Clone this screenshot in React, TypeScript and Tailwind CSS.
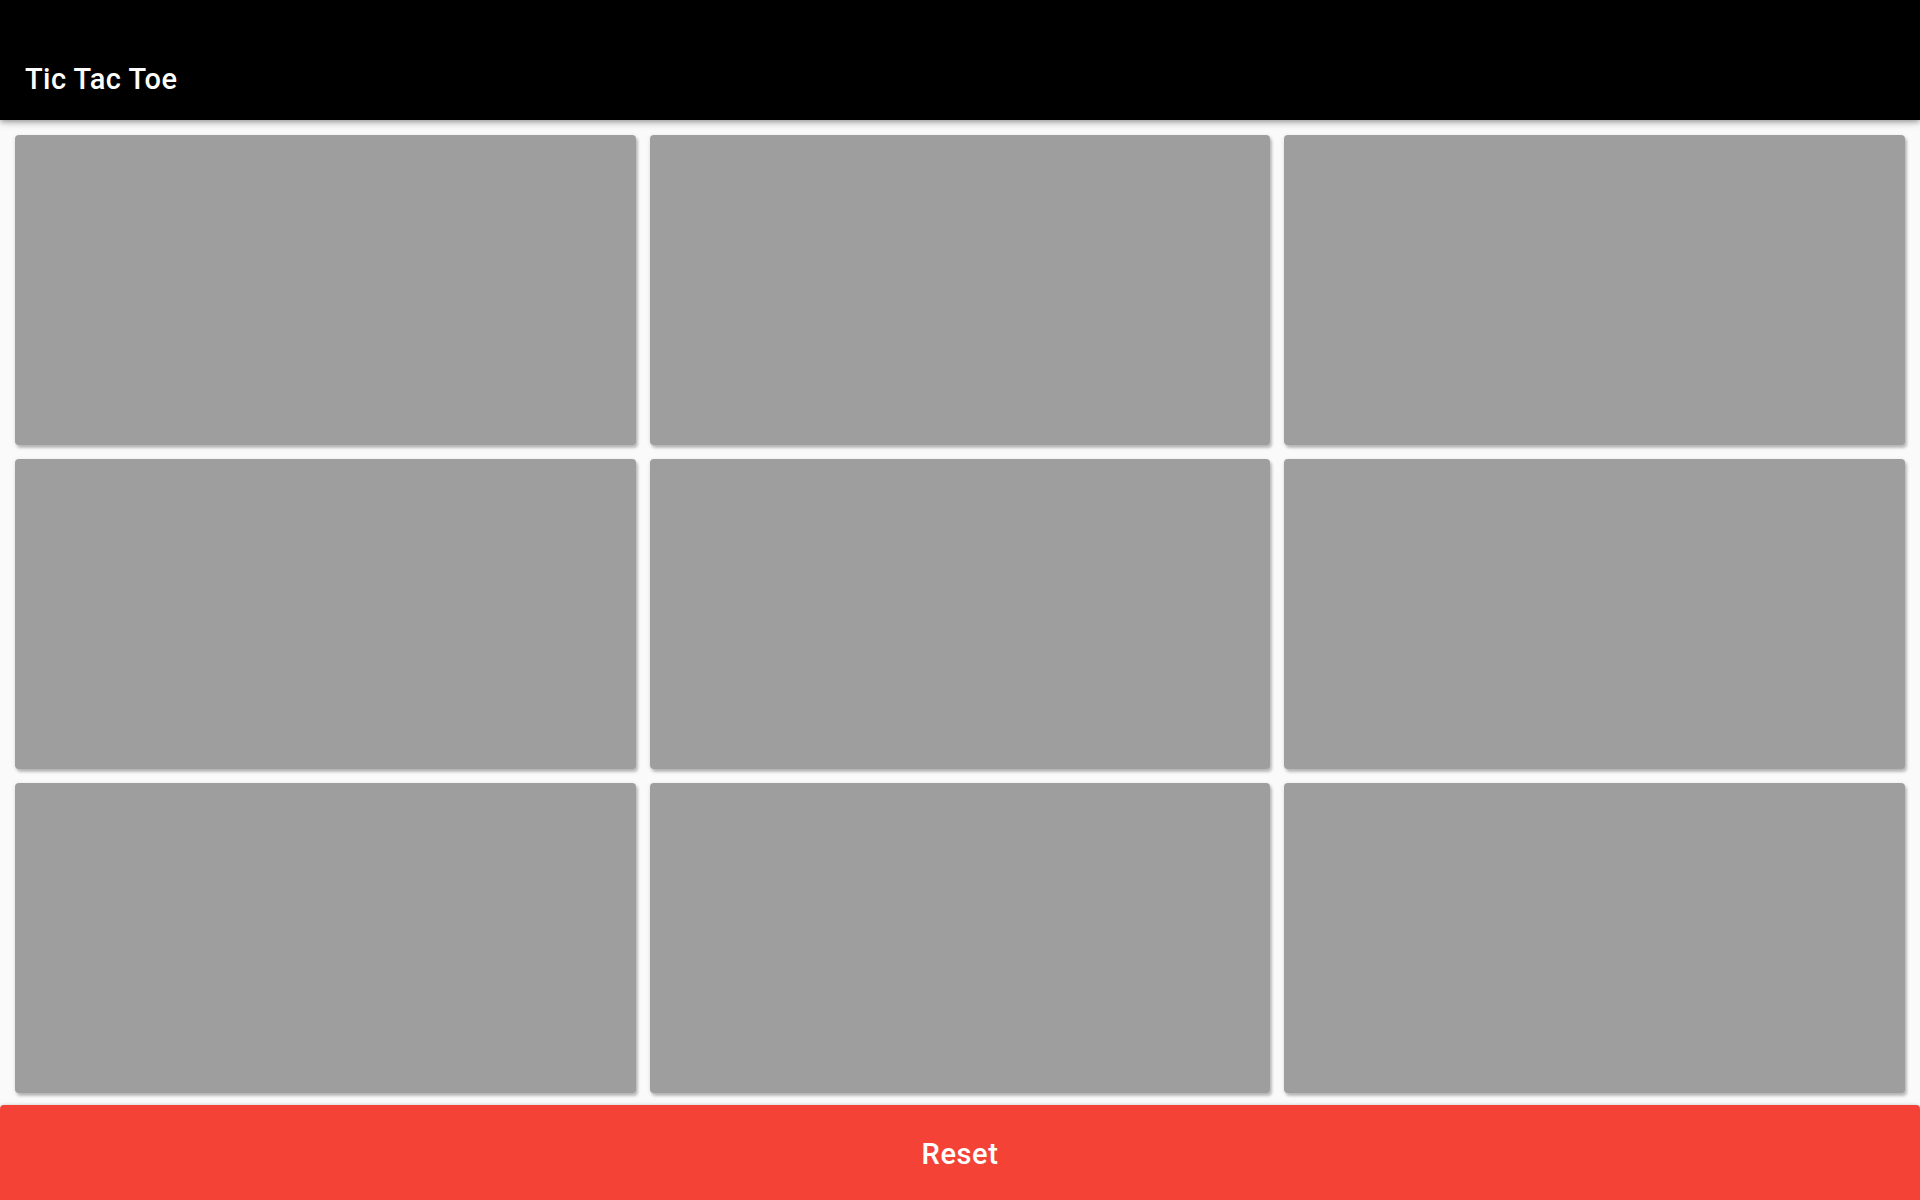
import React from "react";

export default function App() {
  const cells = Array.from({ length: 9 });
  return (
    <div
      className="w-[1920px] h-[1200px] bg-[#fafafa] flex flex-col overflow-hidden"
      style={{ fontFamily: "Roboto, 'Liberation Sans', sans-serif" }}
    >
      <header className="h-[120px] shrink-0 bg-black flex items-center pt-[38px] px-[25px] shadow-[0px_2px_4px_-1px_rgba(0,0,0,0.2),0px_4px_5px_0px_rgba(0,0,0,0.14),0px_1px_10px_0px_rgba(0,0,0,0.12)] z-10">
        <h1 className="text-white text-[29px] font-medium leading-none tracking-[0.45px]">Tic Tac Toe</h1>
      </header>
      <main className="px-[15px] pt-[15px] grid grid-cols-3 grid-rows-[310px_310px_310px] gap-[14px]">
        {cells.map((_, i) => (
          <div
            key={i}
            className="bg-[#9e9e9e] rounded-[4px] shadow-[2px_3px_3px_0px_rgba(0,0,0,0.22),0px_1px_4px_0px_rgba(0,0,0,0.12)]"
          />
        ))}
      </main>
      <button className="mt-[12px] h-[95px] w-full pt-[4px] bg-[#f44336] text-white text-[29px] font-medium rounded-t-[4px] tracking-[0.6px] shadow-[0px_-1px_3px_0px_rgba(0,0,0,0.12)]">
        Reset
      </button>
    </div>
  );
}
